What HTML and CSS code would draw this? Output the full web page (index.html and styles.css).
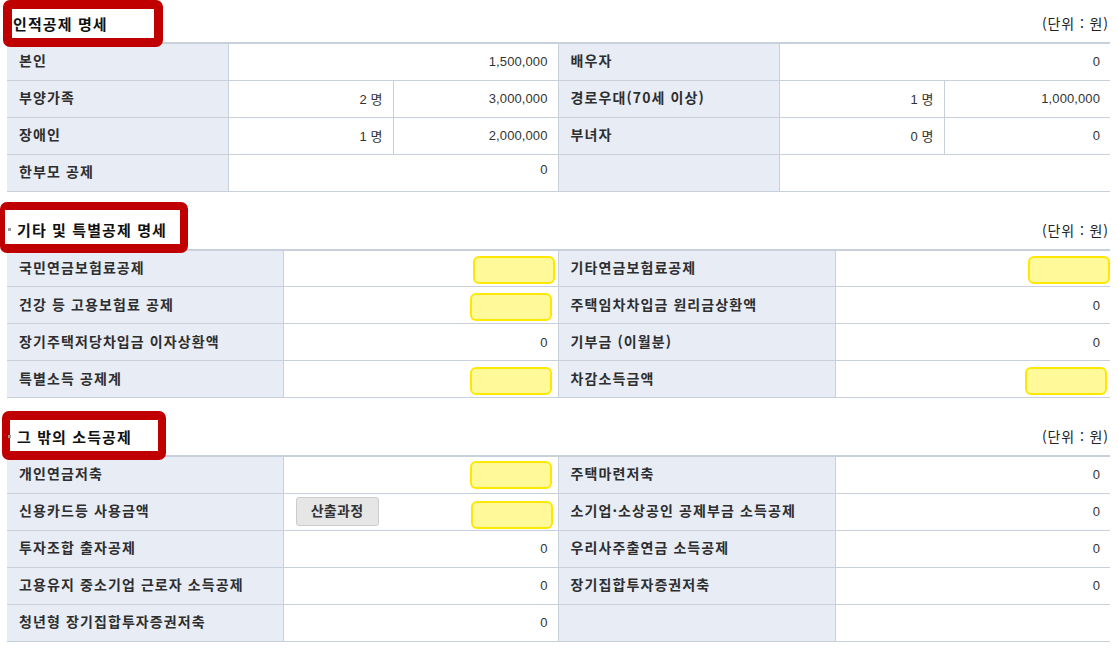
FILE: index.html
```html
<!DOCTYPE html>
<html lang="ko">
<head>
<meta charset="utf-8">
<link rel="stylesheet" href="styles.css">
</head>
<body>
<div class="page">

  <section class="sec">
    <div class="sec-head">
      <h2 class="title title--first">인적공제 명세</h2>
      <span class="unit">(단위 : 원)</span>
    </div>
    <div class="mark mark--1"></div>
    <table class="grid grid--six">
      <colgroup>
        <col class="c-l1"><col class="c-v1"><col class="c-v2"><col class="c-l1"><col class="c-v1"><col class="c-v3">
      </colgroup>
      <tr>
        <th>본인</th><td class="num" colspan="2">1,500,000</td>
        <th>배우자</th><td class="num" colspan="2">0</td>
      </tr>
      <tr>
        <th>부양가족</th><td class="num">2 명</td><td class="num">3,000,000</td>
        <th>경로우대(70세 이상)</th><td class="num">1 명</td><td class="num">1,000,000</td>
      </tr>
      <tr>
        <th>장애인</th><td class="num">1 명</td><td class="num">2,000,000</td>
        <th>부녀자</th><td class="num">0 명</td><td class="num">0</td>
      </tr>
      <tr>
        <th>한부모 공제</th><td class="num num--up" colspan="2">0</td>
        <th></th><td colspan="2"></td>
      </tr>
    </table>
  </section>

  <section class="sec sec--gap">
    <div class="sec-head">
      <h2 class="title"><span class="bullet"></span>기타 및 특별공제 명세</h2>
      <span class="unit">(단위 : 원)</span>
    </div>
    <div class="mark mark--2"></div>
    <table class="grid grid--four">
      <colgroup>
        <col class="c-a"><col class="c-b"><col class="c-c"><col class="c-b">
      </colgroup>
      <tr>
        <th>국민연금보험료공제</th><td class="num"><span class="hl hl--r3"></span></td>
        <th>기타연금보험료공제</th><td class="num"><span class="hl hl--r0"></span></td>
      </tr>
      <tr>
        <th>건강 등 고용보험료 공제</th><td class="num"><span class="hl"></span></td>
        <th>주택임차차입금 원리금상환액</th><td class="num">0</td>
      </tr>
      <tr>
        <th>장기주택저당차입금 이자상환액</th><td class="num">0</td>
        <th>기부금 (이월분)</th><td class="num">0</td>
      </tr>
      <tr>
        <th>특별소득 공제계</th><td class="num"><span class="hl"></span></td>
        <th>차감소득금액</th><td class="num"><span class="hl hl--r3"></span></td>
      </tr>
    </table>
  </section>

  <section class="sec sec--gap">
    <div class="sec-head">
      <h2 class="title"><span class="bullet"></span>그 밖의 소득공제</h2>
      <span class="unit">(단위 : 원)</span>
    </div>
    <div class="mark mark--3"></div>
    <table class="grid grid--four">
      <colgroup>
        <col class="c-a"><col class="c-b"><col class="c-c"><col class="c-b">
      </colgroup>
      <tr>
        <th>개인연금저축</th><td class="num"><span class="hl hl--up"></span></td>
        <th>주택마련저축</th><td class="num">0</td>
      </tr>
      <tr>
        <th>신용카드등 사용금액</th>
        <td class="split"><button class="btn" type="button">산출과정</button><span class="hl"></span></td>
        <th>소기업·소상공인 공제부금 소득공제</th><td class="num">0</td>
      </tr>
      <tr>
        <th>투자조합 출자공제</th><td class="num">0</td>
        <th>우리사주출연금 소득공제</th><td class="num">0</td>
      </tr>
      <tr>
        <th>고용유지 중소기업 근로자 소득공제</th><td class="num">0</td>
        <th>장기집합투자증권저축</th><td class="num">0</td>
      </tr>
      <tr>
        <th>청년형 장기집합투자증권저축</th><td class="num">0</td>
        <th></th><td></td>
      </tr>
    </table>
  </section>

</div>
</body>
</html>
```

FILE: styles.css
```css
* { box-sizing: border-box; }

html, body {
  margin: 0;
  padding: 0;
  background: #ffffff;
}

body {
  font-family: "Noto Sans CJK KR", "Liberation Sans", sans-serif;
  color: #333333;
}

.page {
  width: 1110px;
  padding-left: 7px;
}

.sec {
  position: relative;
}

.sec--gap {
  margin-top: 15px;
}

.sec-head {
  height: 42px;
  padding-top: 4px;
  display: flex;
  align-items: center;
  justify-content: space-between;
}

.title {
  margin: 0;
  display: flex;
  align-items: center;
  font-size: 15px;
  font-weight: 700;
  color: #111111;
  letter-spacing: 1.1px;
  padding-left: 1px;
  position: relative;
  z-index: 2;
}

.title--first {
  padding-left: 6px;
}

.bullet {
  display: inline-block;
  width: 3px;
  height: 3px;
  background: #9a9a9a;
  margin-right: 6px;
}

.unit {
  font-size: 14px;
  color: #222222;
  padding-right: 1px;
  letter-spacing: 0.9px;
}

/* red annotation frames laid over the headings */
.mark {
  position: absolute;
  border: 9px solid #c00000;
  border-radius: 7px;
  z-index: 1;
  pointer-events: none;
}

.mark--1 {
  left: -4px;
  top: 0;
  width: 160px;
  height: 47px;
}

.mark--2 {
  left: -7px;
  top: -5px;
  width: 188px;
  height: 51px;
  border-width: 8px 8px 9px 5px;
}

.mark--3 {
  left: -5px;
  top: -2px;
  width: 164px;
  height: 49px;
  border-width: 9px 8px 9px 8px;
}

.grid {
  width: 1103px;
  border-collapse: collapse;
  table-layout: fixed;
  border-top: 2px solid #c8d0dc;
}

.c-l1 { width: 221px; }
.c-v1 { width: 165px; }
.c-v2 { width: 165px; }
.c-v3 { width: 166px; }

.c-a { width: 276px; }
.c-b { width: 275px; }
.c-c { width: 277px; }

.grid th,
.grid td {
  height: 37px;
  border-bottom: 1px solid #c8d0dc;
  border-left: 1px solid #c8d0dc;
  padding: 0;
  vertical-align: middle;
}

.grid th:first-child {
  border-left: none;
}

.grid th {
  background: #e7ecf5;
  text-align: left;
  font-size: 14px;
  font-weight: 700;
  color: #2e2e2e;
  padding-left: 12px;
  padding-bottom: 3px;
  letter-spacing: 1.1px;
  white-space: nowrap;
}

.grid td {
  background: #ffffff;
}

.grid .num {
  text-align: right;
  padding-right: 10px;
  font-family: "Liberation Sans", "Noto Sans CJK KR", sans-serif;
  font-size: 13px;
  color: #333333;
  letter-spacing: 0.1px;
}

.grid .num--up {
  vertical-align: top;
  padding-top: 7px;
}

.hl {
  display: inline-block;
  vertical-align: middle;
  width: 82px;
  height: 28px;
  margin-top: 4px;
  margin-right: -4px;
  background: #fff99a;
  border: 2px solid #ffe800;
  border-radius: 6px;
}

.hl--r3 {
  margin-right: -7px;
}

.hl--r0 {
  margin-right: -10px;
}

.hl--up {
  margin-top: 0;
}

.grid .split {
  padding: 0 5px 0 12px;
}

.split .btn {
  float: left;
  margin-top: 2px;
}

.split .hl {
  float: right;
  margin: 6px 0 0 0;
}

.btn {
  width: 83px;
  height: 29px;
  background: #e6e6e6;
  border: 1px solid #cccccc;
  border-radius: 3px;
  font-family: "Noto Sans CJK KR", sans-serif;
  font-size: 14px;
  font-weight: 700;
  color: #333333;
  padding: 0 0 2px 0;
  letter-spacing: 0.3px;
}
```
